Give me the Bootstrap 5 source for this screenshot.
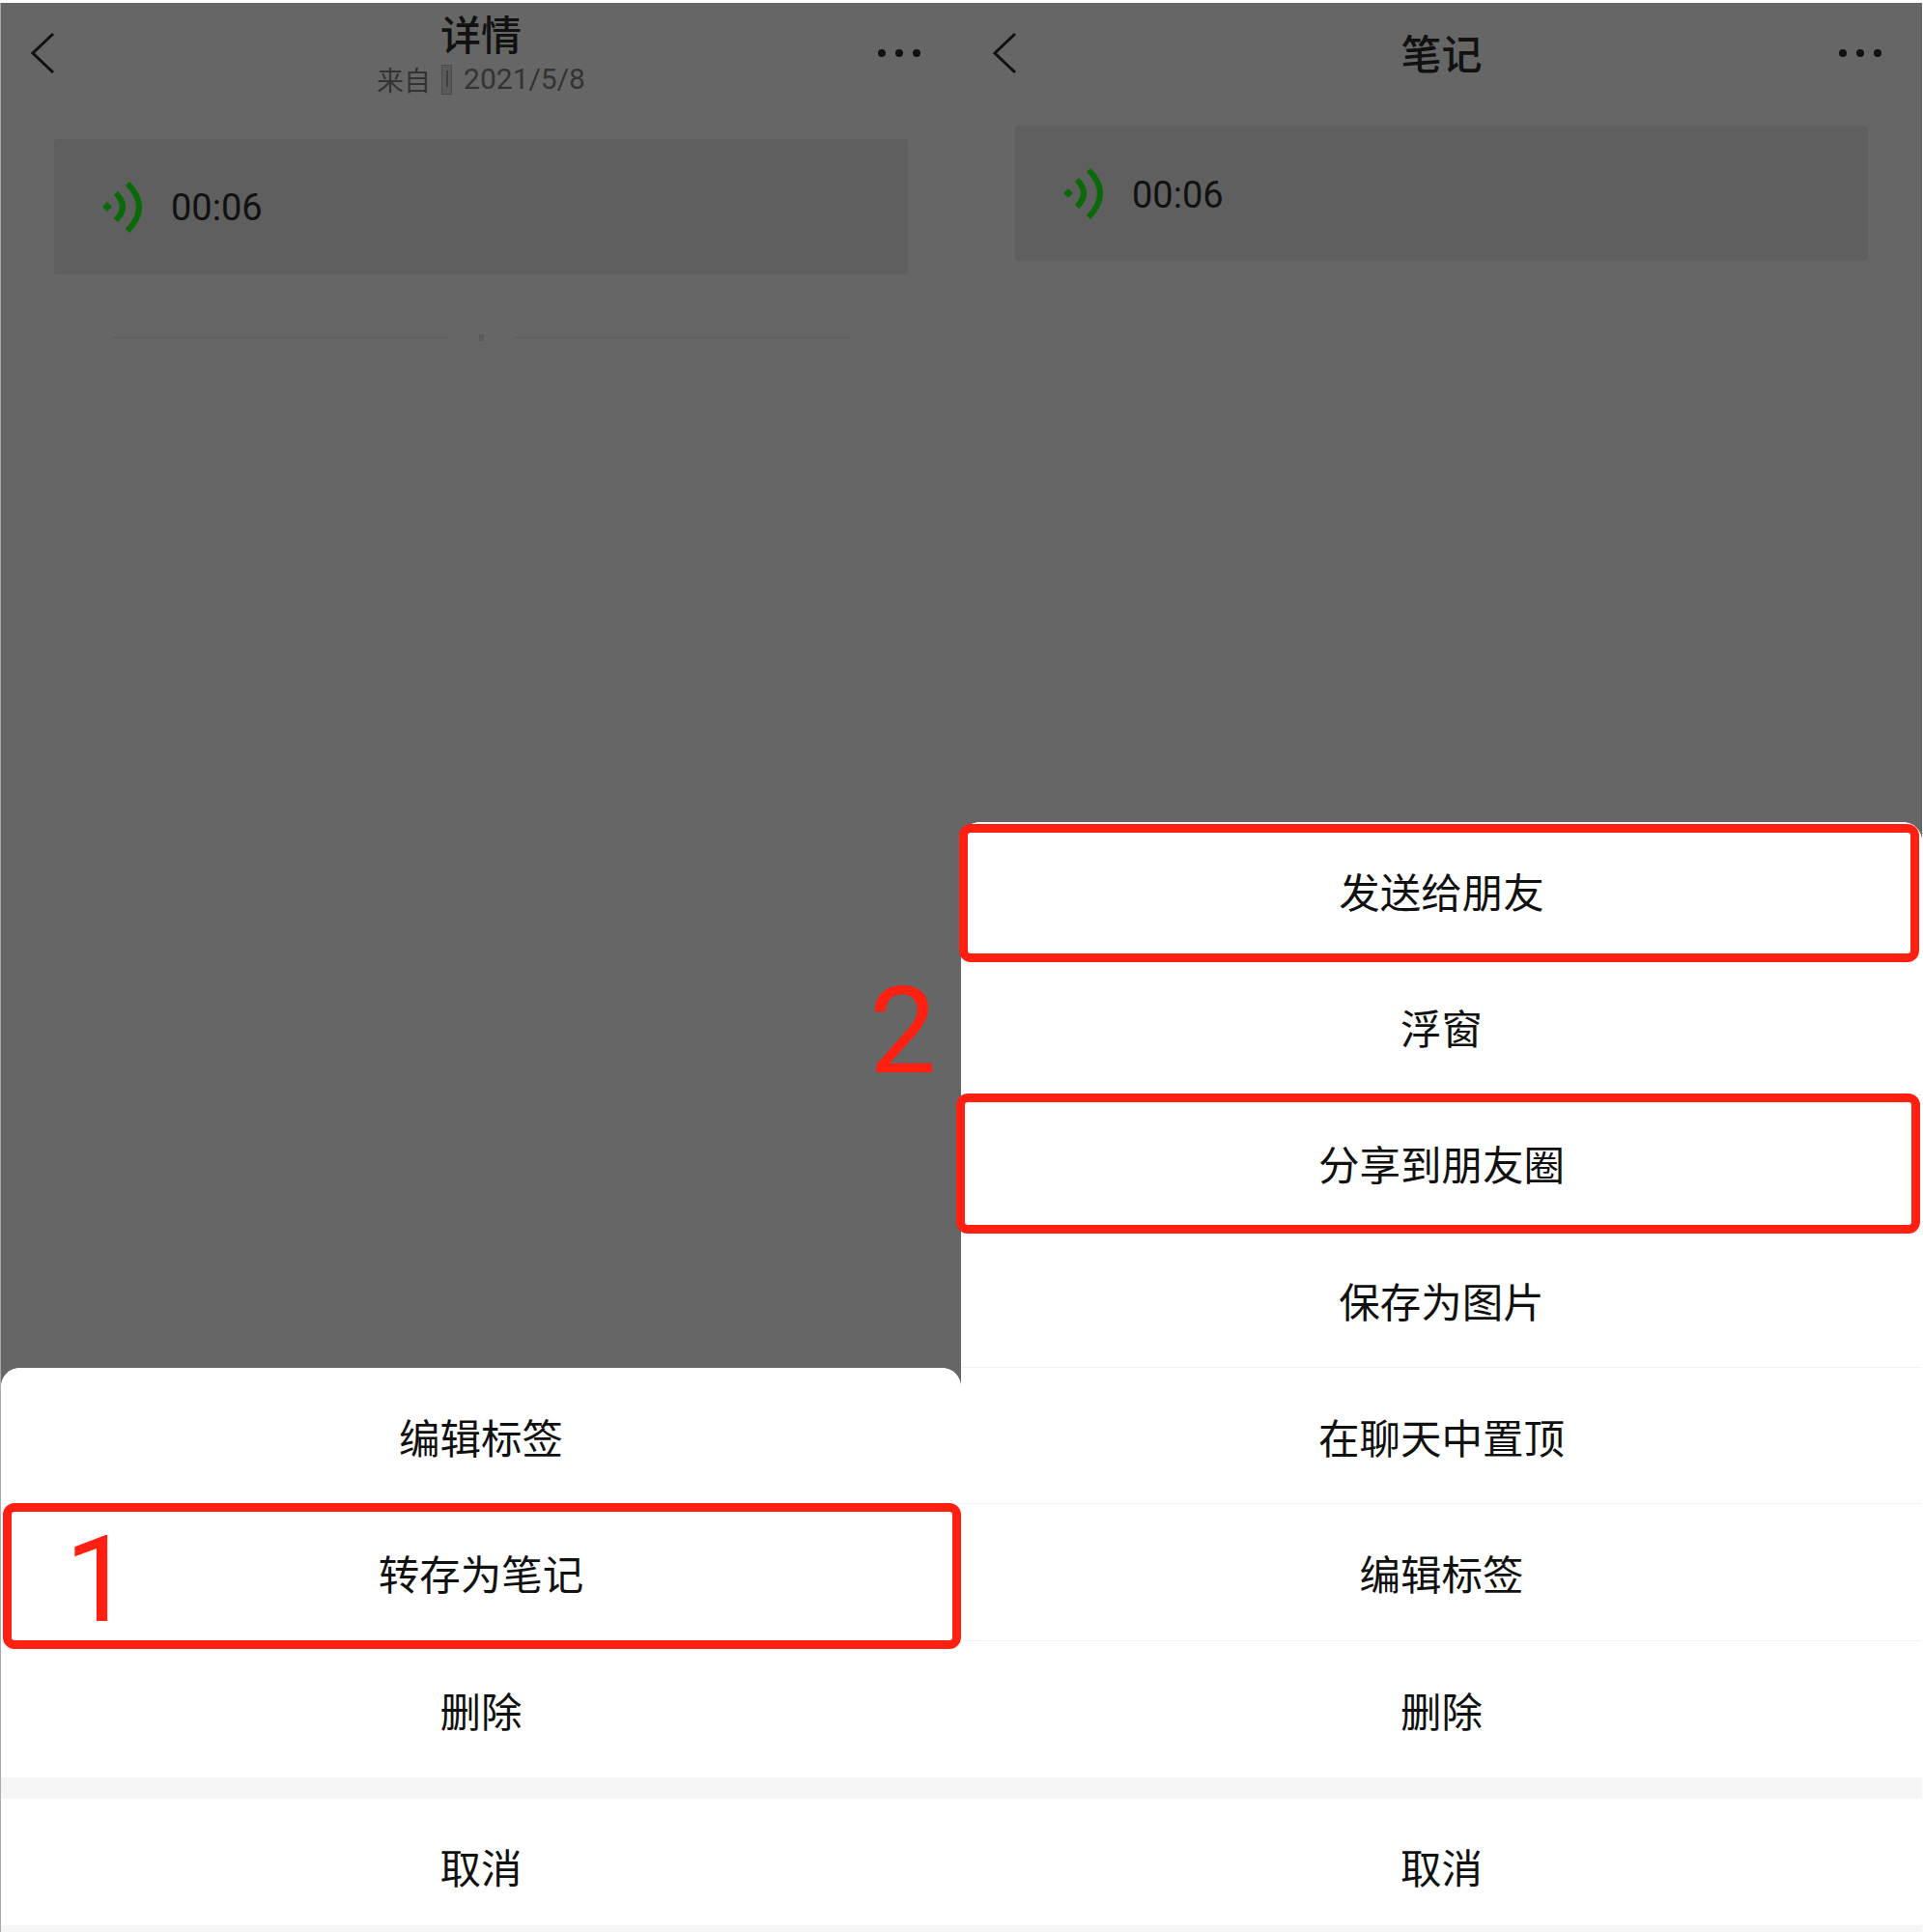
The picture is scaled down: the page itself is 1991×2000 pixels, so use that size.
<!DOCTYPE html>
<html lang="zh-CN">

<head>
  <meta charset="UTF-8">
  <title>转存为笔记</title>
  <link href="https://cdn.jsdelivr.net/npm/bootstrap@5.3.3/dist/css/bootstrap.min.css" rel="stylesheet">
  <style>
    body {
      width: 1991px;
      height: 2000px;
      background: #fff;
      color: #111;
      font-family: "Noto Sans CJK SC", "Liberation Sans", sans-serif;
    }

    .screens {
      height: 2000px;
      padding: 3px 1px 0 0;
    }

    .phone {
      background: #666;
      height: 100%;
    }

    .phone-left {
      width: 995px;
      border-left: 1px solid #aaa;
    }

    .phone-right {
      width: 995px;
    }

    .top-bar {
      height: 104px;
      padding: 0 33px;
    }

    .top-side {
      flex: 1 1 0;
    }

    .phone-left .top-side svg {
      margin-left: -2px;
    }

    .top-dots {
      gap: 10px;
      margin-right: 9px;
    }

    .top-dots i {
      width: 8px;
      height: 8px;
      border-radius: 50%;
      background: #111;
    }

    .title-text {
      font-size: 42px;
      line-height: 50px;
      font-weight: 500;
    }

    .phone-left .title-text {
      margin-top: -1px;
    }

    .phone-right .title-text {
      margin-bottom: 3px;
    }

    .title-sub {
      margin-top: 5px;
      font-size: 28px;
      line-height: 36px;
      color: #333;
      gap: 12px;
    }

    .title-sender {
      gap: 11px;
    }

    .title-date {
      font-family: Roboto, sans-serif;
      font-size: 30px;
    }

    .from-icon {
      width: 11px;
      height: 31px;
      background: linear-gradient(#3f3f3f, #3f3f3f) center / 2px 60% no-repeat, #5a5a5a;
      border: 1px solid #4a4a4a;
    }

    .voice-box {
      height: 140px;
      margin: 0 56px;
      padding-left: 50px;
      gap: 30px;
      background: #5f5f5f;
      border-radius: 4px;
    }

    .phone-left .voice-box {
      margin: 37px 55px 0;
    }

    .phone-right .voice-box {
      margin-top: 23px;
    }

    .voice-time {
      padding-top: 2px;
      font-family: Roboto, sans-serif;
      font-size: 38px;
      line-height: 1;
    }

    .phone-right .voice-time {
      padding-top: 4px;
    }

    .end-line {
      margin: 62px 115px 0;
      gap: 31px;
    }

    .end-line span {
      flex: 1 1 0;
      height: 1px;
      background: #5d5d5d;
    }

    .end-line i {
      width: 5px;
      height: 7px;
      background: #5a5a5a;
    }

    .action-sheet {
      margin-top: auto;
      background: #f5f5f5;
      padding-bottom: 7px;
      border-radius: 20px 20px 0 0;
    }

    .action-row {
      height: 141.3px;
      padding: 2px 0 0;
      font-size: 42.5px;
      line-height: 1;
      color: #111;
      background: #fff;
      border: 0;
      border-bottom: 2px solid #f2f2f2;
    }

    .action-row:first-child {
      border-radius: 20px 20px 0 0;
    }

    .action-row.row-end {
      border-bottom: 0;
    }

    .action-cancel {
      height: 131px;
      margin-top: 22px;
      padding-top: 10px;
    }

    /* red annotations laid over the screenshot */
    .red-frame {
      position: absolute;
      z-index: 2;
      border: 9px solid #ff2012;
      border-radius: 12px;
      pointer-events: none;
    }

    .frame-save {
      inset: -1px 0 -9px 2px;
    }

    .frame-send {
      inset: 2px 3px -5px -2px;
    }

    .frame-moments {
      inset: -2px 2px -3px -5px;
    }

    .red-number {
      position: absolute;
      z-index: 2;
      font-family: Roboto, sans-serif;
      font-size: 124px;
      line-height: 1;
      color: #ff2012;
    }

    .number-one {
      left: 66px;
      top: 17px;
    }

    .number-two {
      left: -95px;
      top: 14px;
    }
  </style>
</head>

<body>
  <div class="screens d-flex">

    <!-- 详情 -->
    <div class="phone phone-left d-flex flex-column">
      <div class="top-bar d-flex align-items-center">
        <div class="top-side">
          <svg width="25" height="44" viewBox="0 0 25 44" fill="none" stroke="#111" stroke-width="3" class="d-block">
            <path d="M23 2 2 22 23 42" />
          </svg>
        </div>
        <div class="text-center">
          <div class="title-text">详情</div>
          <div class="title-sub d-flex align-items-center justify-content-center">
            <span class="title-sender d-flex align-items-center">来自<span class="from-icon"></span></span>
            <span class="title-date">2021/5/8</span>
          </div>
        </div>
        <div class="top-side d-flex justify-content-end">
          <div class="top-dots d-flex"><i></i><i></i><i></i></div>
        </div>
      </div>

      <div class="voice-box d-flex align-items-center">
        <svg width="41" height="55" viewBox="0 0 41 55" fill="none" stroke="#0a6a0a" stroke-width="6">
          <path d="M5 22 10 27 5 32 0 27Z" fill="#0a6a0a" stroke="none" />
          <path d="M14 13Q28 27 14 41" />
          <path d="M26 3Q50 27 26 52" />
        </svg>
        <span class="voice-time">00:06</span>
      </div>

      <div class="end-line d-flex align-items-center"><span></span><i></i><span></span></div>

      <div class="action-sheet">
        <div class="list-group list-group-flush">
          <div class="list-group-item action-row d-flex align-items-center justify-content-center">编辑标签</div>
          <div class="list-group-item action-row d-flex align-items-center justify-content-center">
            转存为笔记
            <span class="red-frame frame-save"></span>
            <span class="red-number number-one">1</span>
          </div>
          <div class="list-group-item action-row row-end d-flex align-items-center justify-content-center">删除</div>
        </div>
        <div class="action-row row-end action-cancel d-flex align-items-center justify-content-center">取消</div>
      </div>
    </div>

    <!-- 笔记 -->
    <div class="phone phone-right d-flex flex-column">
      <div class="top-bar d-flex align-items-center">
        <div class="top-side">
          <svg width="25" height="44" viewBox="0 0 25 44" fill="none" stroke="#111" stroke-width="3" class="d-block">
            <path d="M23 2 2 22 23 42" />
          </svg>
        </div>
        <div class="title-text">笔记</div>
        <div class="top-side d-flex justify-content-end">
          <div class="top-dots d-flex"><i></i><i></i><i></i></div>
        </div>
      </div>

      <div class="voice-box d-flex align-items-center">
        <svg width="41" height="55" viewBox="0 0 41 55" fill="none" stroke="#0a6a0a" stroke-width="6">
          <path d="M5 22 10 27 5 32 0 27Z" fill="#0a6a0a" stroke="none" />
          <path d="M14 13Q28 27 14 41" />
          <path d="M26 3Q50 27 26 52" />
        </svg>
        <span class="voice-time">00:06</span>
      </div>

      <div class="action-sheet">
        <div class="list-group list-group-flush">
          <div class="list-group-item action-row d-flex align-items-center justify-content-center">
            发送给朋友
            <span class="red-frame frame-send"></span>
          </div>
          <div class="list-group-item action-row d-flex align-items-center justify-content-center">
            浮窗
            <span class="red-number number-two">2</span>
          </div>
          <div class="list-group-item action-row d-flex align-items-center justify-content-center">
            分享到朋友圈
            <span class="red-frame frame-moments"></span>
          </div>
          <div class="list-group-item action-row d-flex align-items-center justify-content-center">保存为图片</div>
          <div class="list-group-item action-row d-flex align-items-center justify-content-center">在聊天中置顶</div>
          <div class="list-group-item action-row d-flex align-items-center justify-content-center">编辑标签</div>
          <div class="list-group-item action-row row-end d-flex align-items-center justify-content-center">删除</div>
        </div>
        <div class="action-row row-end action-cancel d-flex align-items-center justify-content-center">取消</div>
      </div>
    </div>

  </div>

  <script src="https://cdn.jsdelivr.net/npm/bootstrap@5.3.3/dist/js/bootstrap.bundle.min.js"></script>
</body>

</html>
